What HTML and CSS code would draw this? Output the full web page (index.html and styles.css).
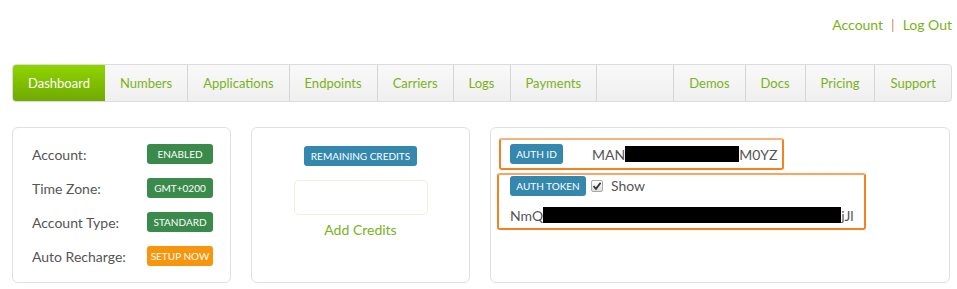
FILE: index.html
```html
<!DOCTYPE html>
<html lang="en">
<head>
    <meta charset="UTF-8">
    <title>Dashboard</title>
    <link rel="stylesheet" href="styles.css">
</head>
<body>
    <div class="page">
        <div class="top-links">
            <a href="#">Account</a>
            <span class="sep">|</span>
            <a href="#">Log Out</a>
        </div>

        <nav class="navbar">
            <a href="#" class="active">Dashboard</a>
            <a href="#">Numbers</a>
            <a href="#">Applications</a>
            <a href="#">Endpoints</a>
            <a href="#">Carriers</a>
            <a href="#">Logs</a>
            <a href="#">Payments</a>
            <span class="spacer"></span>
            <a href="#">Demos</a>
            <a href="#">Docs</a>
            <a href="#">Pricing</a>
            <a href="#" class="last">Support</a>
        </nav>

        <div class="panels">
            <!-- Datos de la cuenta -->
            <div class="panel account-panel">
                <div class="row"><span class="label">Account:</span><span class="badge green">ENABLED</span></div>
                <div class="row"><span class="label">Time Zone:</span><span class="badge green">GMT+0200</span></div>
                <div class="row"><span class="label">Account Type:</span><span class="badge green">STANDARD</span></div>
                <div class="row"><span class="label">Auto Recharge:</span><span class="badge orange">SETUP NOW</span></div>
            </div>

            <!-- Créditos -->
            <div class="panel credits-panel">
                <span class="badge blue">REMAINING CREDITS</span>
                <div class="credits-box"></div>
                <a href="#" class="add-credits">Add Credits</a>
            </div>

            <!-- Credenciales -->
            <div class="panel auth-panel">
                <div class="auth-box auth-id">
                    <span class="badge blue">AUTH ID</span>
                    <span class="auth-value">MAN<span class="redact" style="width:114px"></span>M0YZ</span>
                </div>
                <div class="auth-box auth-token">
                    <div class="token-head">
                        <span class="badge blue">AUTH TOKEN</span>
                        <label class="show">
                            <span class="check">
                                <svg width="10" height="10" viewBox="0 0 10 10"><path d="M1.5 5.2 L4 7.8 L8.6 1.8" fill="none" stroke="#333" stroke-width="1.8"/></svg>
                            </span>
                            Show
                        </label>
                    </div>
                    <div class="token-value">NmQ<span class="redact" style="width:298px"></span>jJl</div>
                </div>
            </div>
        </div>
    </div>
</body>
</html>
```

FILE: styles.css
```css
/* Reset */
* {
    margin: 0;
    padding: 0;
    box-sizing: border-box;
}

body {
    font-family: 'Lato', 'Open Sans', sans-serif;
    font-size: 14px;
    color: #555;
    background-color: #fff;
}

a {
    color: #7ab317;
    text-decoration: none;
}

.page {
    padding: 0 5px 0 12px;
}

.top-links {
    display: flex;
    justify-content: flex-end;
    align-items: center;
    gap: 8px;
    height: 48px;
    font-size: 14px;
}

.top-links .sep {
    color: #d08a60;
}

/* Barra de navegación */
.navbar {
    display: flex;
    height: 38px;
    margin-top: 16px;
    border: 1px solid #dcdcdc;
    border-radius: 4px;
    background: linear-gradient(#f9f9f9, #efefef);
    overflow: hidden;
}

.navbar a {
    display: flex;
    align-items: center;
    padding: 0 15px;
    border-right: 1px solid #d6d6d6;
    font-size: 13px;
    color: #7ab317;
}

.navbar a.active {
    background: linear-gradient(#8fd400, #70aa00);
    color: #fff;
    padding: 0 15px;
    border-right: none;
}

.navbar a.last {
    border-right: none;
}

.navbar .spacer {
    flex: 1;
    border-right: 1px solid #d6d6d6;
}

/* Paneles */
.panels {
    display: grid;
    grid-template-columns: 219px 219px 460px;
    gap: 20px;
    margin-top: 25px;
}

.panel {
    height: 156px;
    border: 1px solid #e0e0e0;
    border-radius: 6px;
}

.account-panel {
    padding: 9px 17px 0 19px;
}

.row {
    display: flex;
    justify-content: space-between;
    align-items: center;
    height: 34px;
}

.label {
    font-size: 14px;
    color: #555;
}

.badge {
    display: inline-flex;
    align-items: center;
    justify-content: center;
    height: 20px;
    padding: 0 7px;
    border-radius: 3px;
    color: #fff;
    font-size: 10px;
    white-space: nowrap;
}

.account-panel .badge {
    width: 66px;
    padding: 0;
}

.green {
    background-color: #3a8a4b;
}

.orange {
    background-color: #f7950c;
}

.blue {
    background-color: #3487ad;
}

.credits-panel {
    display: flex;
    flex-direction: column;
    align-items: center;
    padding-top: 18px;
}

.credits-box {
    width: 134px;
    height: 35px;
    margin-top: 14px;
    border: 1px solid #eef2dc;
    border-radius: 5px;
}

.add-credits {
    margin-top: 6px;
    font-size: 14px;
}

/* Credenciales */
.auth-panel {
    padding: 10px 0 0 6px;
}

.auth-box {
    border: 2px solid #f58220;
    border-radius: 3px;
}

.auth-id {
    display: flex;
    align-items: center;
    width: 285px;
    height: 32px;
    margin-left: 2px;
    padding-left: 9px;
    border-top-color: #f9b27a;
}

.auth-id .badge {
    width: 53px;
    padding: 0;
}

.auth-value {
    display: flex;
    align-items: center;
    margin-left: 29px;
    font-size: 14px;
    color: #555;
}

.redact {
    display: inline-block;
    height: 16px;
    background-color: #000;
}

.auth-token {
    width: 369px;
    height: 57px;
    margin-top: 3px;
    padding: 0 0 0 11px;
    border-top-color: #f9a460;
}

.token-head {
    display: flex;
    align-items: center;
    gap: 5px;
    height: 21px;
}

.auth-token .badge {
    width: 76px;
    padding: 0;
}

.show {
    display: flex;
    align-items: center;
    gap: 8px;
    font-size: 14px;
    color: #555;
}

.check {
    display: inline-flex;
    align-items: center;
    justify-content: center;
    width: 12px;
    height: 12px;
    border: 1px solid #aaa;
    border-radius: 2px;
    background: linear-gradient(#fff, #ddd);
}

.token-value {
    display: flex;
    align-items: center;
    height: 24px;
    margin-top: 7px;
    font-size: 14px;
    color: #555;
}
```
